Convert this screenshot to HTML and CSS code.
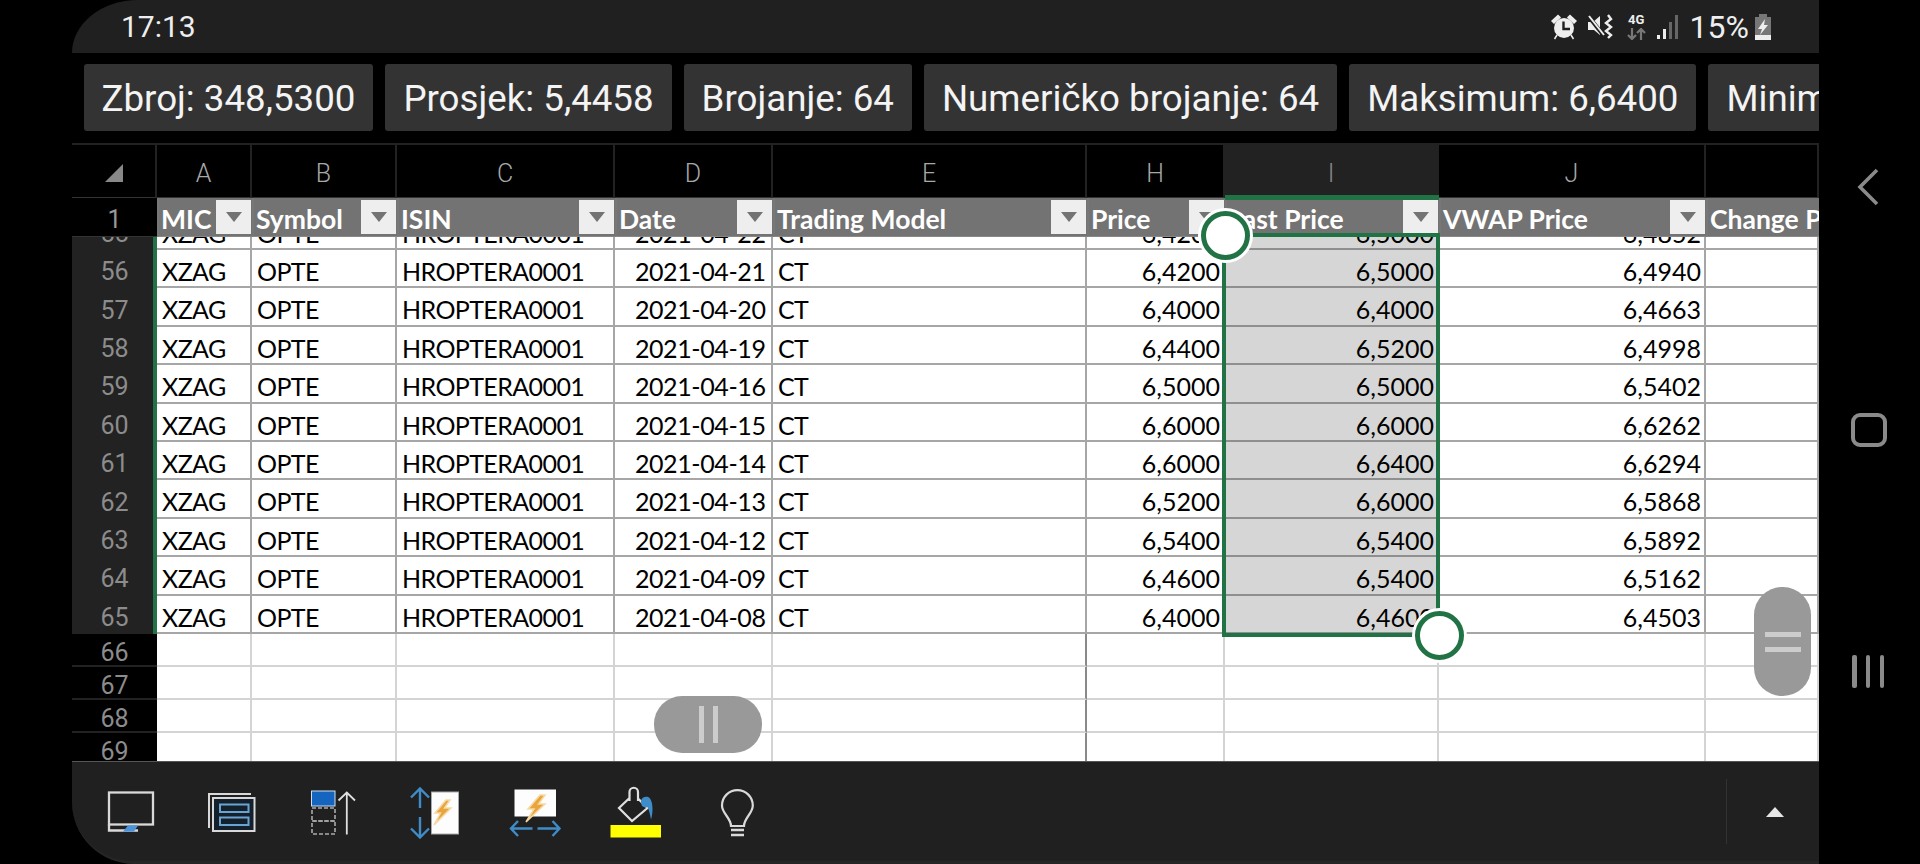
FILE: index.html
```html
<!DOCTYPE html>
<html lang="hr">
<head>
    <meta charset="UTF-8">
    <title>Excel</title>
    <link rel="stylesheet" href="styles.css">
</head>
<body>
    <div class="screen">
        <!-- status bar -->
        <div class="status">
            <span>17:13</span>
            <div class="status-icons">
                <svg width="26" height="26" viewBox="0 0 26 26"><path d="M1 7 L7 1.5 L9 3.5 L3 9Z M25 7 L19 1.5 L17 3.5 L23 9Z M6 21 L3.5 25 M20 21 L22.5 25" fill="#eee" stroke="#eee" stroke-width="1.5"/><circle cx="13" cy="14" r="10" fill="#eee"/><path d="M12.5 7.5 V15 H19" fill="none" stroke="#202020" stroke-width="2.4"/></svg>
                <svg class="ic-mute" width="26" height="25" viewBox="0 0 26 25"><path d="M1 8 H6 L13 2 V21 L7 16 H1Z" fill="#eee"/><path d="M2 3 L17 22" stroke="#202020" stroke-width="4"/><path d="M2 2 L17 21" stroke="#eee" stroke-width="2"/><path d="M21 1 L24 5 L19 9 L24 13 L19 17 L24 21 L21 24" fill="none" stroke="#eee" stroke-width="2.4"/></svg>
                <div class="net"><b>4G</b><svg width="19" height="12" viewBox="0 0 19 12"><path d="M5 0 V11 M1 7 L5 11 L9 7 M14 12 V1 M10 5 L14 1 L18 5" fill="none" stroke="#777" stroke-width="2.2"/></svg></div>
                <svg width="22" height="24" viewBox="0 0 22 24"><rect x="0" y="20" width="3" height="4" fill="#eee"/><rect x="6" y="14" width="3" height="10" fill="#eee"/><rect x="12" y="7" width="3" height="17" fill="#666"/><rect x="18" y="0" width="3" height="24" fill="#666"/></svg>
                <span class="pct">15%</span>
                <svg class="ic-batt" width="18" height="26" viewBox="0 0 18 26"><path d="M5 0 H13 V3 H17 V26 H1 V3 H5Z" fill="#777"/><rect x="1" y="21" width="16" height="5" fill="#eee"/><path d="M11 5 L4 15 H8 L6 21 L14 11 H10Z" fill="#eee"/></svg>
            </div>
        </div>

        <!-- status summary chips -->
        <div class="chips">
            <div class="chip">Zbroj: 348,5300</div>
            <div class="chip">Prosjek: 5,4458</div>
            <div class="chip">Brojanje: 64</div>
            <div class="chip">Numeričko brojanje: 64</div>
            <div class="chip">Maksimum: 6,6400</div>
            <div class="chip">Minimum: 4,4000</div>
        </div>

        <div class="sheet">
            <div class="row row-cols">
                <div class="colh"><span class="corner"></span></div>
                <div class="colh">A</div>
                <div class="colh">B</div>
                <div class="colh">C</div>
                <div class="colh">D</div>
                <div class="colh">E</div>
                <div class="colh">H</div>
                <div class="colh colh-sel">I</div>
                <div class="colh">J</div>
                <div class="colh"></div>
            </div>
            <div class="row row-head">
                <div class="gut">1</div>
                <div class="hd">MIC<span class="flt"></span></div>
                <div class="hd">Symbol<span class="flt"></span></div>
                <div class="hd">ISIN<span class="flt"></span></div>
                <div class="hd">Date<span class="flt"></span></div>
                <div class="hd">Trading Model<span class="flt"></span></div>
                <div class="hd">Price<span class="flt"></span></div>
                <div class="hd">Last Price<span class="flt"></span></div>
                <div class="hd">VWAP Price<span class="flt"></span></div>
                <div class="hd">Change Price</div>
            </div>

            <div class="row row-cut">
                <div class="gut gut-sel">55</div>
                <div class="c">XZAG</div><div class="c">OPTE</div><div class="c">HROPTERA0001</div><div class="c num">2021-04-22</div><div class="c c-mark">CT</div><div class="c num">6,4200</div><div class="c num sel">6,5000</div><div class="c num">6,4852</div><div class="c"></div>
            </div>
            <div class="row">
                <div class="gut gut-sel">56</div>
                <div class="c">XZAG</div><div class="c">OPTE</div><div class="c">HROPTERA0001</div><div class="c num">2021-04-21</div><div class="c c-mark">CT</div><div class="c num">6,4200</div><div class="c num sel">6,5000</div><div class="c num">6,4940</div><div class="c"></div>
            </div>
            <div class="row">
                <div class="gut gut-sel">57</div>
                <div class="c">XZAG</div><div class="c">OPTE</div><div class="c">HROPTERA0001</div><div class="c num">2021-04-20</div><div class="c c-mark">CT</div><div class="c num">6,4000</div><div class="c num sel">6,4000</div><div class="c num">6,4663</div><div class="c"></div>
            </div>
            <div class="row">
                <div class="gut gut-sel">58</div>
                <div class="c">XZAG</div><div class="c">OPTE</div><div class="c">HROPTERA0001</div><div class="c num">2021-04-19</div><div class="c c-mark">CT</div><div class="c num">6,4400</div><div class="c num sel">6,5200</div><div class="c num">6,4998</div><div class="c"></div>
            </div>
            <div class="row">
                <div class="gut gut-sel">59</div>
                <div class="c">XZAG</div><div class="c">OPTE</div><div class="c">HROPTERA0001</div><div class="c num">2021-04-16</div><div class="c c-mark">CT</div><div class="c num">6,5000</div><div class="c num sel">6,5000</div><div class="c num">6,5402</div><div class="c"></div>
            </div>
            <div class="row">
                <div class="gut gut-sel">60</div>
                <div class="c">XZAG</div><div class="c">OPTE</div><div class="c">HROPTERA0001</div><div class="c num">2021-04-15</div><div class="c c-mark">CT</div><div class="c num">6,6000</div><div class="c num sel">6,6000</div><div class="c num">6,6262</div><div class="c"></div>
            </div>
            <div class="row">
                <div class="gut gut-sel">61</div>
                <div class="c">XZAG</div><div class="c">OPTE</div><div class="c">HROPTERA0001</div><div class="c num">2021-04-14</div><div class="c c-mark">CT</div><div class="c num">6,6000</div><div class="c num sel">6,6400</div><div class="c num">6,6294</div><div class="c"></div>
            </div>
            <div class="row">
                <div class="gut gut-sel">62</div>
                <div class="c">XZAG</div><div class="c">OPTE</div><div class="c">HROPTERA0001</div><div class="c num">2021-04-13</div><div class="c c-mark">CT</div><div class="c num">6,5200</div><div class="c num sel">6,6000</div><div class="c num">6,5868</div><div class="c"></div>
            </div>
            <div class="row">
                <div class="gut gut-sel">63</div>
                <div class="c">XZAG</div><div class="c">OPTE</div><div class="c">HROPTERA0001</div><div class="c num">2021-04-12</div><div class="c c-mark">CT</div><div class="c num">6,5400</div><div class="c num sel">6,5400</div><div class="c num">6,5892</div><div class="c"></div>
            </div>
            <div class="row">
                <div class="gut gut-sel">64</div>
                <div class="c">XZAG</div><div class="c">OPTE</div><div class="c">HROPTERA0001</div><div class="c num">2021-04-09</div><div class="c c-mark">CT</div><div class="c num">6,4600</div><div class="c num sel">6,5400</div><div class="c num">6,5162</div><div class="c"></div>
            </div>
            <div class="row">
                <div class="gut gut-sel">65</div>
                <div class="c">XZAG</div><div class="c">OPTE</div><div class="c">HROPTERA0001</div><div class="c num">2021-04-08</div><div class="c c-mark">CT</div><div class="c num">6,4000</div><div class="c num sel">6,4600</div><div class="c num">6,4503</div><div class="c"></div>
            </div>

            <div class="row row-empty">
                <div class="gut">66</div><div class="e"></div><div class="e"></div><div class="e"></div><div class="e"></div><div class="e e-mark"></div><div class="e"></div><div class="e"></div><div class="e"></div><div class="e"></div>
            </div>
            <div class="row row-empty">
                <div class="gut">67</div><div class="e"></div><div class="e"></div><div class="e"></div><div class="e"></div><div class="e e-mark"></div><div class="e"></div><div class="e"></div><div class="e"></div><div class="e"></div>
            </div>
            <div class="row row-empty">
                <div class="gut">68</div><div class="e"></div><div class="e"></div><div class="e"></div><div class="e"></div><div class="e e-mark"></div><div class="e"></div><div class="e"></div><div class="e"></div><div class="e"></div>
            </div>
            <div class="row row-empty">
                <div class="gut">69</div><div class="e"></div><div class="e"></div><div class="e"></div><div class="e"></div><div class="e e-mark"></div><div class="e"></div><div class="e"></div><div class="e"></div><div class="e"></div>
            </div>

            <!-- things lying over the grid -->
            <div class="col-mark"></div>
            <div class="selection"></div>
            <div class="handle handle-a"></div>
            <div class="handle handle-b"></div>
            <div class="scroll scroll-v"><i></i><i></i></div>
            <div class="scroll scroll-h"><i></i><i></i></div>
        </div>

        <!-- bottom toolbar -->
        <div class="toolbar">
            <div class="tool">
                <svg width="54" height="54" viewBox="0 0 54 54"><rect x="5" y="7.5" width="44" height="32" fill="none" stroke="#d9d9d9" stroke-width="2.3"/><path d="M5 39.5 V45.5 H34" fill="none" stroke="#d9d9d9" stroke-width="2.3"/><path d="M19 46.5 L24 40.5 H34 L30 46.5Z" fill="#4a94dc"/></svg>
            </div>
            <div class="tool">
                <svg width="54" height="54" viewBox="0 0 54 54"><path d="M4 43 V9 H46" fill="none" stroke="#d9d9d9" stroke-width="2"/><rect x="8" y="13" width="41.5" height="33" fill="#14202c" stroke="#d9d9d9" stroke-width="2"/><rect x="15" y="19.5" width="28.5" height="7.5" fill="none" stroke="#6aa5d2" stroke-width="2"/><rect x="15" y="32.5" width="28.5" height="7.5" fill="none" stroke="#6aa5d2" stroke-width="2"/></svg>
            </div>
            <div class="tool">
                <svg width="54" height="54" viewBox="0 0 54 54"><rect x="5.5" y="6" width="23.5" height="15" fill="#1565c0" stroke="#cfdfee" stroke-width="1"/><rect x="6" y="23" width="23" height="13" fill="none" stroke="#aaa" stroke-width="1.6" stroke-dasharray="4 2"/><rect x="6" y="36" width="23" height="13" fill="none" stroke="#aaa" stroke-width="1.6" stroke-dasharray="4 2"/><path d="M40.8 49.5 V7.5 M32.5 15.5 L40.8 7.5 L49 15.5" fill="none" stroke="#e0e0e0" stroke-width="1.8"/></svg>
            </div>
            <div class="tool">
                <svg width="54" height="54" viewBox="0 0 54 54"><rect x="24.5" y="7" width="27" height="42" fill="#fdfdfd" stroke="#aaa" stroke-width="1"/><path d="M39 15 L28 28 H33.5 L27 40 L44 23 H37.5 L43 15Z" fill="#e8a53e" stroke="#f6d9a3" stroke-width="1.5"/><path d="M13 4 V23 M13 32 V52 M4 12.5 L13 3.5 L22 12.5 M4 43.5 L13 52.5 L22 43.5" fill="none" stroke="#3f8cc8" stroke-width="2.4"/></svg>
            </div>
            <div class="tool">
                <svg width="54" height="54" viewBox="0 0 54 54"><rect x="6.5" y="4.5" width="41.5" height="27" fill="#fdfdfd"/><path d="M32 10 L20 24 H26 L18 37 L37 19 H30.5 L37 10Z" fill="#e8a53e" stroke="#f6d9a3" stroke-width="1.5"/><path d="M24.5 43.5 H3 M10 36 L3 43.5 L10 51 M29.5 43.5 H51.5 M44.5 36 L51.5 43.5 L44.5 51" fill="none" stroke="#3f8cc8" stroke-width="2.4"/></svg>
            </div>
            <div class="tool">
                <svg width="54" height="54" viewBox="0 0 54 54"><path d="M20.5 13 L10 23 L23 36 L38.5 23 L29 13.5 M20.5 16 V7 A4.2 4.2 0 0 1 29 7 V16" fill="none" stroke="#e0e0e0" stroke-width="2.2"/><path d="M32 17 C32 12 37 11.5 39 12 C42 13 43.5 18 43.5 24 C43.5 28 43 31 42 34.5 C41 29 40 25 38.5 22 C35 23.5 32 21 32 17Z" fill="#3f8cc8"/><rect x="1.5" y="40" width="50.5" height="12.5" fill="#ffff00"/></svg>
            </div>
            <div class="tool">
                <svg width="54" height="54" viewBox="0 0 54 54"><path d="M21 41 C21 33 12 28.5 12 20.5 A15.4 15.4 0 0 1 42.8 20.5 C42.8 28.5 34 33 34 41Z" fill="none" stroke="#d9d9d9" stroke-width="2.2"/><path d="M21 45 H34 M21 50 H34" stroke="#d9d9d9" stroke-width="2.4"/></svg>
            </div>
            <div class="expand"><span class="expand-arrow"></span></div>
        </div>
    </div>

    <!-- android navigation -->
    <div class="nav">
        <svg width="22" height="38" viewBox="0 0 22 38"><path d="M20 2 L3 19 L20 36" fill="none" stroke="#8a8a8a" stroke-width="3.6"/></svg>
        <span class="nav-home"></span>
        <div class="nav-recents"><i></i><i></i><i></i></div>
    </div>
</body>
</html>
```

FILE: styles.css
```css
* {
    box-sizing: border-box;
}
body {
    margin: 0;
    padding-left: 72px;
    background-color: #000;
    display: flex;
    height: 864px;
    overflow: hidden;
    font-family: Roboto, sans-serif;
}
.screen {
    width: 1747px;
    height: 864px;
    display: flex;
    flex-direction: column;
}

/* status bar */
.status {
    height: 53px;
    background-color: #202020;
    border-top-left-radius: 66px 53px;
    color: #eee;
    font-size: 30px;
    display: flex;
    align-items: center;
    justify-content: space-between;
    padding: 0 47px 0 49px;
}
.status-icons {
    display: flex;
    align-items: center;
}
.ic-mute {
    margin-left: 10px;
}
.net {
    width: 21px;
    margin: 0 10px 0 13px;
    display: flex;
    flex-direction: column;
    align-items: center;
    gap: 2px;
}
.net b {
    font-size: 13px;
    line-height: 12px;
}
.pct {
    font-size: 32px;
    margin: 0 5px 0 11px;
}

/* chips */
.chips {
    display: flex;
    gap: 12px;
    height: 90px;
    padding: 11px 0 12px 11.5px;
    overflow: hidden;
}
.chip {
    flex: none;
    background-color: #333;
    border-radius: 3px;
    color: #f4f4f4;
    font-size: 36.7px;
    line-height: 70px;
    height: 67px;
    padding: 0 18px;
    white-space: nowrap;
}

/* sheet */
.sheet {
    position: relative;
    height: 618px;
    border-top: 2px solid #222;
    overflow: hidden;
}
.row {
    display: grid;
    grid-template-columns: 85px 95px 145px 218px 158px 314px 138px 214px 267px 113px;
    grid-template-rows: 100%;
    height: 38.4px;
    font-family: Lato, sans-serif;
    font-size: 25px;
    letter-spacing: -0.6px;
    color: #000;
}
.row-cols {
    height: 53px;
}
.colh {
    background-color: #000;
    border-right: 2px solid #222;
    border-bottom: 1px solid #333;
    color: #a8a8a8;
    font-family: Roboto, sans-serif;
    font-size: 25px;
    font-weight: 300;
    letter-spacing: 0;
    padding-top: 4px;
    display: flex;
    align-items: center;
    justify-content: center;
    position: relative;
}
.colh-sel {
    background-color: #222;
    color: #888;
}
.corner {
    position: absolute;
    left: 33px;
    top: 19px;
    width: 0;
    height: 0;
    border-left: 18px solid transparent;
    border-bottom: 18px solid #888;
}
.gut {
    background-color: #000;
    color: #8c8c8c;
    font-family: Roboto, sans-serif;
    font-size: 25px;
    font-weight: 400;
    letter-spacing: 0;
    text-align: center;
    border-bottom: 2px solid #222;
    padding-top: 5px;
    display: flex;
    align-items: center;
    justify-content: center;
}
.gut-sel {
    background-color: #222;
    border-right: 4px solid #217346;
    border-bottom: 0;
    padding-left: 4px;
}
.row-head {
    height: 39px;
    font-size: 26.5px;
    letter-spacing: 0;
    font-weight: 700;
    color: #fff;
    white-space: nowrap;
}
.row-head .gut {
    color: #999;
    border-bottom: 1px solid #333;
    padding-top: 4px;
}
.hd {
    background-color: #737373;
    border-left: 2px solid #777;
    border-bottom: 1px solid #888;
    padding: 4px 0 0 2px;
    display: flex;
    align-items: center;
    justify-content: space-between;
    overflow: hidden;
}
.flt {
    flex: none;
    width: 35px;
    height: 34px;
    margin: -4px 1px 0 0;
    background-color: #eee;
    position: relative;
}
.flt::after {
    content: "";
    position: absolute;
    left: 10px;
    top: 12px;
    border-left: 8px solid transparent;
    border-right: 8px solid transparent;
    border-top: 10px solid #737373;
}
.row-cut {
    height: 13px;
    grid-template-rows: 38.4px;
    overflow: hidden;
}
.row-cut .c,
.row-cut .gut {
    margin-top: -25.4px;
    height: 38.4px;
}
.c {
    background-color: #fff;
    border-right: 2px solid #a6a6a6;
    border-bottom: 2px solid #a6a6a6;
    padding: 3px 0 0 5px;
    line-height: 36px;
    white-space: nowrap;
    overflow: hidden;
}
.num {
    text-align: right;
    letter-spacing: 0;
    padding: 3px 3px 0 0;
}
/* date column: dates sit further from the line than the prices */
.row > .num:nth-child(5) {
    letter-spacing: -0.4px;
    padding-right: 5.5px;
}
.sel {
    background-color: #d6d6d6;
    border-bottom-color: #8f8f8f;
}
.row-empty {
    height: 33px;
}
.row-empty .gut {
    padding-top: 7px;
}
.e {
    background-color: #fff;
    border-right: 2px solid #d4d4d4;
    border-bottom: 2px solid #d4d4d4;
}
.e-mark {
    border-right-color: #8a8a8a;
}

/* selection and touch handles */
.col-mark {
    position: absolute;
    left: 1153px;
    top: 50px;
    width: 214px;
    height: 5px;
    background-color: #217346;
}
.selection {
    position: absolute;
    left: 1150px;
    top: 88px;
    width: 218px;
    height: 404px;
    border: 4.5px solid #217346;
}
.handle {
    position: absolute;
    width: 49px;
    height: 49px;
    border-radius: 50%;
    background-color: #fff;
    border: 5px solid #217346;
    box-shadow: 0 0 0 3px #fff;
}
.handle-a {
    left: 1128.5px;
    top: 65.5px;
}
.handle-b {
    left: 1342.5px;
    top: 465.5px;
}
.scroll {
    position: absolute;
    background-color: #999;
    border-radius: 28px;
    display: flex;
    align-items: center;
    justify-content: center;
}
.scroll i {
    display: block;
    background-color: #ccc;
}
.scroll-v {
    left: 1682px;
    top: 442px;
    width: 57px;
    height: 109px;
    flex-direction: column;
    gap: 10px;
}
.scroll-v i {
    width: 36px;
    height: 5px;
}
.scroll-h {
    left: 582px;
    top: 551px;
    width: 108px;
    height: 57px;
    gap: 9px;
}
.scroll-h i {
    width: 5px;
    height: 37px;
}

/* toolbar */
.toolbar {
    height: 103px;
    background-color: #202020;
    border-top: 1px solid #555;
    border-bottom: 3px solid #252525;
    border-bottom-left-radius: 62px;
    display: flex;
    align-items: center;
    padding-left: 8.5px;
}
.tool {
    width: 101px;
    display: flex;
    justify-content: center;
}
.expand {
    margin-left: auto;
    width: 93px;
    height: 65px;
    border-left: 1px solid #333;
    display: flex;
    align-items: center;
    justify-content: center;
    padding-left: 3px;
}
.expand-arrow {
    border-left: 9px solid transparent;
    border-right: 9px solid transparent;
    border-bottom: 10px solid #e6e6e6;
}

/* android nav */
.nav {
    width: 101px;
    height: 864px;
    position: relative;
}
.nav svg,
.nav-home,
.nav-recents {
    position: absolute;
}
.nav svg {
    left: 38px;
    top: 168px;
}
.nav-home {
    left: 32px;
    top: 413px;
    width: 36px;
    height: 34px;
    border: 4px solid #8a8a8a;
    border-radius: 9px;
}
.nav-recents {
    left: 33px;
    top: 655px;
    width: 32px;
    height: 33px;
    display: flex;
    justify-content: space-between;
}
.nav-recents i {
    width: 4.5px;
    background-color: #8a8a8a;
    border-radius: 2px;
}
```
